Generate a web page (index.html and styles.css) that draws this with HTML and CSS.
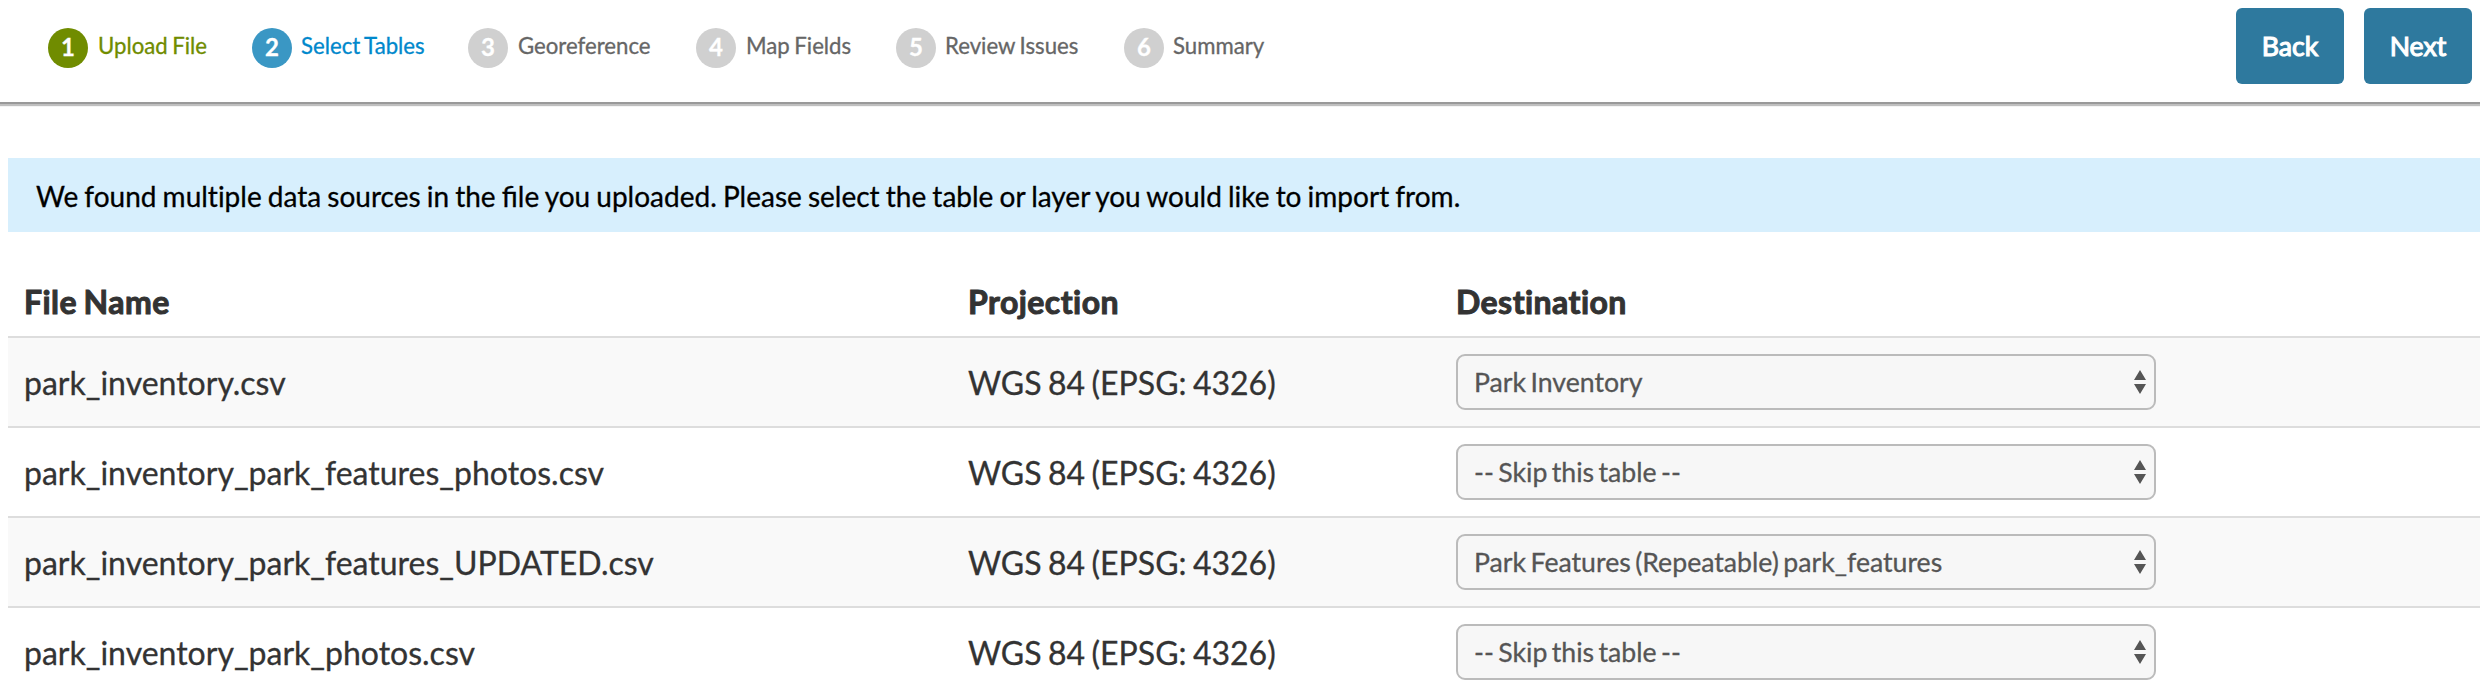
FILE: index.html
```html
<!DOCTYPE html>
<html lang="en">
<head>
<meta charset="utf-8">
<title>Import - Select Tables</title>
<link rel="stylesheet" href="styles.css">
</head>
<body>
<header class="topbar">
  <ol class="steps">
    <li class="step done"><span class="num">1</span><span class="label">Upload File</span></li>
    <li class="step active"><span class="num">2</span><span class="label">Select Tables</span></li>
    <li class="step"><span class="num">3</span><span class="label">Georeference</span></li>
    <li class="step"><span class="num">4</span><span class="label">Map Fields</span></li>
    <li class="step"><span class="num">5</span><span class="label">Review Issues</span></li>
    <li class="step"><span class="num">6</span><span class="label">Summary</span></li>
  </ol>
  <div class="actions">
    <button class="btn" type="button">Back</button>
    <button class="btn" type="button">Next</button>
  </div>
</header>
<main class="content">
  <p class="notice">We found <span class="plain">multiple</span> data sources in the file you uploaded. Please select the table or layer you would like to import from.</p>
  <div class="table">
    <div class="row head"><span>File Name</span><span>Projection</span><span>Destination</span></div>
    <div class="row">
      <span>park_inventory.csv</span><span>WGS 84 (EPSG: 4326)</span>
      <div class="select"><span>Park Inventory</span><svg class="arrows" viewBox="0 0 12 24"><path d="M6 0l6 10H0zM0 14h12L6 24z"/></svg></div>
    </div>
    <div class="row">
      <span>park_inventory_park_features_photos.csv</span><span>WGS 84 (EPSG: 4326)</span>
      <div class="select"><span>-- Skip this table --</span><svg class="arrows" viewBox="0 0 12 24"><path d="M6 0l6 10H0zM0 14h12L6 24z"/></svg></div>
    </div>
    <div class="row">
      <span>park_inventory_park_features_UPDATED.csv</span><span>WGS 84 (EPSG: 4326)</span>
      <div class="select"><span>Park Features (Repeatable) park_features</span><svg class="arrows" viewBox="0 0 12 24"><path d="M6 0l6 10H0zM0 14h12L6 24z"/></svg></div>
    </div>
    <div class="row">
      <span>park_inventory_park_photos.csv</span><span>WGS 84 (EPSG: 4326)</span>
      <div class="select"><span>-- Skip this table --</span><svg class="arrows" viewBox="0 0 12 24"><path d="M6 0l6 10H0zM0 14h12L6 24z"/></svg></div>
    </div>
  </div>
</main>
</body>
</html>
```
FILE: styles.css
```css
* { box-sizing: border-box; }
body {
  margin: 0;
  height: 692px;
  overflow: hidden;
  background: #fff;
  color: #333;
  font-family: Lato, "Liberation Sans", sans-serif;
  -webkit-text-stroke: 0.3px currentColor;
}
.topbar {
  display: flex;
  justify-content: space-between;
  align-items: flex-start;
  height: 104px;
  padding: 8px 8px 0 48px;
  border-bottom: 2px solid #999;
  box-shadow: 0 2px 1px rgba(0, 0, 0, 0.25);
}
.steps {
  display: grid;
  grid-template-columns: 204px 216px 228px 200px 228px auto;
  margin: 20px 0 0;
  padding: 0;
  list-style: none;
}
.step {
  display: flex;
  align-items: center;
  gap: 10px;
  height: 40px;
  color: #666;
  font-size: 22.2px;
  word-spacing: -0.05em;
  white-space: nowrap;
}
.active, .step:nth-child(n+5) { gap: 9px; }
.num {
  width: 40px;
  height: 40px;
  border-radius: 50%;
  background: #d0d0d0;
  font-size: 24px;
  font-weight: 700;
  line-height: 38px;
  text-align: center;
}
.label { line-height: 36px; padding-bottom: 4px; }
.done { color: #708c00; }
.done .num { background: #708c00; }
.active { color: #0088cc; }
.active .num { background: #3a97c4; }
.num, .done .num, .active .num { color: #fff; }
.actions { display: flex; gap: 20px; }
.btn {
  width: 108px;
  height: 76px;
  padding: 0;
  border: 0;
  border-radius: 6px;
  background: #2e799e;
  color: #fff;
  font: 400 26.67px/76px Lato, "Liberation Sans", sans-serif;
  -webkit-text-stroke: 1.1px currentColor;
}
.content { padding: 54px 0 0 8px; }
.notice {
  margin: 0 0 44px;
  height: 74px;
  padding: 0 28px;
  background: #d7effd;
  color: #000;
  font-size: 28px;
  line-height: 76px;
  word-spacing: -0.037em;
}
.plain { font-variant-ligatures: none; }
.row {
  display: grid;
  grid-template-columns: 944px 488px 700px;
  align-items: center;
  height: 90px;
  padding-left: 16px;
  border-top: 2px solid #ddd;
  font-size: 32px;
  word-spacing: -0.055em;
}
.row:nth-child(even) { background: #f9f9f9; }
.head {
  height: 60px;
  padding-bottom: 9px;
  border-top: 0;
  font-weight: 700;
  letter-spacing: 0.45px;
  -webkit-text-stroke: 1px currentColor;
}
.select {
  display: flex;
  justify-content: space-between;
  align-items: center;
  height: 56px;
  padding: 0 8px 0 16px;
  border: 2px solid #bbb;
  border-radius: 9px;
  background: #f7f7f7;
  color: #555;
  font-size: 26.67px;
  word-spacing: -0.09em;
}
.arrows { width: 12px; height: 24px; fill: #555; }
```
